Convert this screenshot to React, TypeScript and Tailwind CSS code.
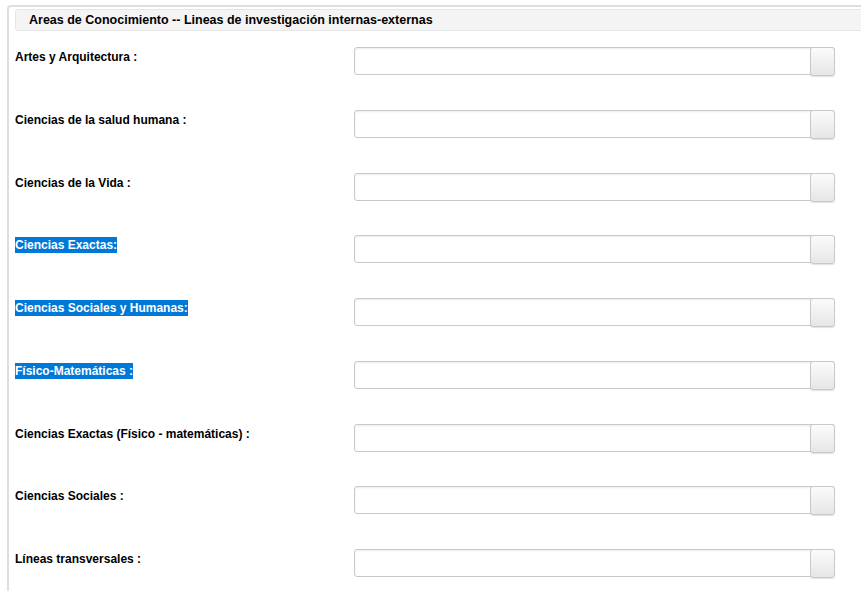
import React from 'react';

const rows = [
  { label: 'Artes y Arquitectura :', selected: false },
  { label: 'Ciencias de la salud humana :', selected: false },
  { label: 'Ciencias de la Vida :', selected: false },
  { label: 'Ciencias Exactas:', selected: true },
  { label: 'Ciencias Sociales y Humanas:', selected: true },
  { label: 'Físico-Matemáticas :', selected: true },
  { label: 'Ciencias Exactas (Físico - matemáticas) :', selected: false },
  { label: 'Ciencias Sociales :', selected: false },
  { label: 'Líneas transversales :', selected: false },
];

function ComboField() {
  return (
    <div className="relative flex h-[28px] w-[481px] rounded-[3px] border border-[#c9c9c9] bg-white shadow-[inset_0_1px_2px_rgba(0,0,0,0.08)]">
      <div className="flex-1" />
      <div className="-my-px -mr-px h-[29px] w-[25px] rounded-[3px] border border-[#c9c9c9] bg-gradient-to-b from-[#fbfbfb] to-[#e6e6e6] shadow-[0_1px_1px_rgba(0,0,0,0.12)]" />
    </div>
  );
}

export default function App() {
  return (
    <div
      className="h-[591px] w-[861px] overflow-hidden bg-white pl-[7px] pt-[5px] text-[12px] text-black"
      style={{ fontFamily: '"Liberation Sans", Arial, sans-serif' }}
    >
      <div className="w-[900px] rounded-tl-[4px] border-l-2 border-t-2 border-[#dedede] pl-[6px] pt-[2px]">
        <div className="flex h-[22px] items-center rounded-[3px] border border-[#e6e6e6] bg-[#f4f4f4] pl-[13px] pt-[1px] text-[12.5px] font-bold">
          Areas de Conocimiento -- Lineas de investigación internas-externas
        </div>
        <div className="pt-[16px]">
          {rows.map((r) => (
            <div key={r.label} className="flex h-[62.75px] items-start">
              <div className="w-[339px] pt-[2px] font-bold leading-[16px]">
                {r.selected ? (
                  <span className="bg-[#0078d7] py-[1px] text-white">{r.label}</span>
                ) : (
                  r.label
                )}
              </div>
              <ComboField />
            </div>
          ))}
        </div>
      </div>
    </div>
  );
}
